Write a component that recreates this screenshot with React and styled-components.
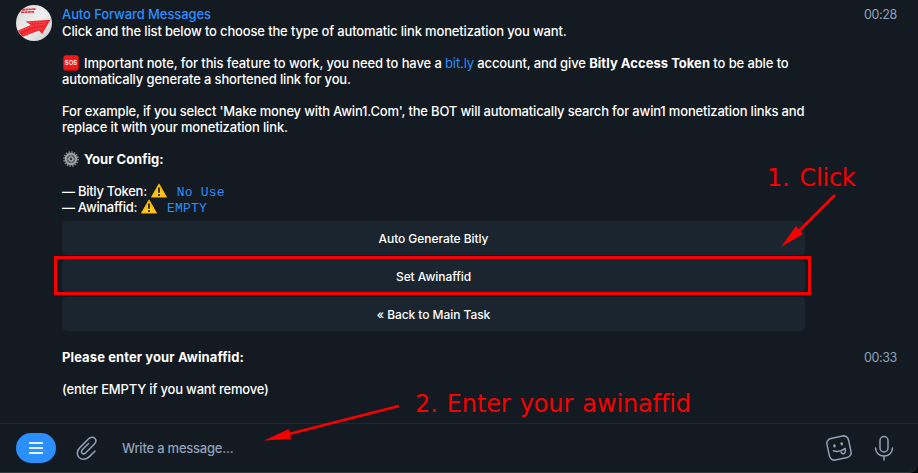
import React from "react";
import styled, { createGlobalStyle } from "styled-components";

const GlobalStyle = createGlobalStyle`
  * { box-sizing: border-box; }
  body { margin: 0; background: #08090b; overflow: hidden; }
`;

const Window = styled.main`
  position: relative;
  display: flex;
  flex-direction: column;
  width: 918px;
  height: 473px;
  background: #141a21;
  border-bottom-right-radius: 9px;
  color: #fff;
  font: 500 13px/16px Inter, "Liberation Sans", sans-serif;
`;

const Messages = styled.section`
  flex: 1;
  padding: 5px 21px 0 16px;
`;

const Message = styled.article`
  display: grid;
  grid-template-columns: 46px 743px 1fr;
  margin-bottom: ${(p) => p.$gap || 0}px;
`;

const Avatar = styled.svg`
  display: block;
  width: 36px;
  height: 36px;
`;

const Content = styled.div`
  grid-column: 2;
`;

const Time = styled.time`
  justify-self: end;
  height: ${(p) => p.$height || 18}px;
  line-height: ${(p) => p.$height || 18}px;
  padding-top: 1px;
  font-weight: 400;
  font-size: 12.5px;
  letter-spacing: -0.35px;
  color: #8fa2b9;
`;

const Sender = styled.div`
  height: 18px;
  line-height: 18px;
  color: #2b8fff;
  letter-spacing: -0.09px;
`;

const Line = styled.div`
  display: flex;
  align-items: center;
  height: 16px;
  white-space: pre;
  letter-spacing: ${(p) => p.$tracking ?? -0.15}px;
  font-weight: ${(p) => (p.$bold ? 700 : 500)};
  margin-bottom: ${(p) => (p.$end ? 16 : 0)}px;
`;

const Strong = styled.strong`
  font-weight: 700;
  letter-spacing: 0.03px;
`;

const Link = styled.a`
  color: #2b8fff;
  font-weight: 400;
`;

const Code = styled.code`
  color: #2b8fff;
  font: 400 13px/16px "Liberation Mono", monospace;
  letter-spacing: 0.2px;
  margin-left: 10px;
  padding-top: 3px;
`;

const Emoji = styled.svg`
  width: 16px;
  height: 16px;
  flex: none;
  margin-left: ${(p) => p.$left || 0}px;
  margin-right: ${(p) => p.$right || 0}px;
`;

const Keyboard = styled.div`
  display: grid;
  gap: 4px;
  margin-top: 6px;
`;

const KeyButton = styled.button`
  height: 34px;
  padding: 1px 0 0;
  border: 0;
  border-radius: 5px;
  background: #1a2530;
  color: #fff;
  font: 500 12px/33px Inter, sans-serif;
  letter-spacing: -0.06px;
`;

const Composer = styled.footer`
  display: flex;
  align-items: center;
  height: 50px;
  padding: 0 24px 0 16px;
  border-top: 1px solid #1d2631;
  border-bottom: 1px solid #34383f;
  border-bottom-right-radius: 9px;
`;

const MenuButton = styled.button`
  display: grid;
  place-items: center;
  width: 40px;
  height: 30px;
  padding: 0;
  border: 0;
  border-radius: 15px;
  background: #2b8fff;
`;

const ToolIcon = styled.svg`
  width: ${(p) => p.$w}px;
  height: ${(p) => p.$h}px;
  margin-left: ${(p) => p.$left}px;
  fill: none;
  stroke: #8fa2b9;
  stroke-width: 1.5;
  stroke-linecap: round;
  stroke-linejoin: round;
`;

const Placeholder = styled.span`
  flex: 1;
  margin-left: 25px;
  color: #8fa2b9;
  letter-spacing: -0.22px;
`;

const Highlight = styled.div`
  position: absolute;
  left: 54px;
  top: 256px;
  width: 757px;
  height: 39px;
  border: 3px solid #f80000;
`;

const Note = styled.span`
  position: absolute;
  left: ${(p) => p.$x}px;
  top: ${(p) => p.$y}px;
  color: #f80000;
  font: 24px/28px "DejaVu Sans", sans-serif;
  font-variant-ligatures: none;
  letter-spacing: ${(p) => p.$tracking}px;
  word-spacing: ${(p) => p.$gap}px;
  white-space: pre;
`;

const Arrows = styled.svg`
  position: absolute;
  inset: 0;
  pointer-events: none;
`;

const Warning = () => (
  <Emoji viewBox="0 0 16 16" $left={4}>
    <path d="M8 1.2 15.3 14H.7Z" fill="#ffc51b" stroke="#f4b60e" strokeWidth="1.2" strokeLinejoin="round" />
    <path d="M8 4.5v5.300M8 11.300v1.7" stroke="#28241c" strokeWidth="1.8" />
  </Emoji>
);

const Sos = () => (
  <Emoji viewBox="0 0 16 16" $left={1} $right={5}>
    <rect x=".2" y=".2" width="15.6" height="15.6" rx="2.8" fill="#cf1015" />
    <rect x=".8" y=".6" width="14.4" height="13.8" rx="2.2" fill="#f0191c" />
    <text x="8" y="10" textAnchor="middle" fill="#fff" fontFamily="Inter" fontSize="6" fontWeight="600" letterSpacing="0">SOS</text>
  </Emoji>
);

const Gear = () => (
  <Emoji viewBox="0 0 16 16" $left={1} $right={5}>
    <circle cx="8" cy="8" r="7" fill="none" stroke="#8c9197" strokeWidth="1.6" strokeDasharray="1.45 1.3" />
    <circle cx="8" cy="8" r="5.3" fill="#545b62" stroke="#a0a4a9" strokeWidth="1.9" />
    <path d="M8 3v3M8 10v3M3 8h3M10 8h3" stroke="#858b91" />
    <circle cx="8" cy="8" r="2" fill="#30373f" stroke="#b0b4b8" strokeWidth="1.2" />
  </Emoji>
);

export default function App() {
  return (
    <>
      <GlobalStyle />
      <Window>
        <Messages>
          <Message $gap={18}>
            <Avatar viewBox="0 0 36 36">
              <defs>
                <clipPath id="disc"><circle cx="18" cy="18" r="18" /></clipPath>
                <linearGradient id="paper" x1="0" y1="0" x2="1" y2="1">
                  <stop stopColor="#d2d2d2" /><stop offset=".5" stopColor="#f0f0f0" /><stop offset="1" stopColor="#c9c9c9" />
                </linearGradient>
              </defs>
              <g clipPath="url(#disc)">
                <path fill="url(#paper)" d="M0 0h36v36H0z" />
                <path d="M6 4.8 20 4M5 7.4l13-.6" stroke="#e33941" strokeWidth="1.7" strokeDasharray="3 .4" />
                <path d="m9.500 16.500 25-1.800-8.500 14.300-3-3.500-17 6.500L2 25.500l13-5.500Z" fill="#f1252d" />
                <path d="m12 18 19-1.200M4 26l15-5.700 10-1.300M7 29.500l15-6.200 5 .5" fill="none" stroke="#f7a9ab" strokeWidth=".5" strokeDasharray="1.500 1.200" />
              </g>
            </Avatar>
            <Content>
              <Sender>Auto Forward Messages</Sender>
              <Line $end>Click and the list below to choose the type of automatic link monetization you want.</Line>
              <Line $tracking={-0.115}><Sos /><span>Important note, for this feature to work, you need to have a <Link>bit.ly</Link> account, and give <Strong>Bitly Access Token</Strong> to be able to</span></Line>
              <Line $end>automatically generate a shortened link for you.</Line>
              <Line $tracking={-0.18}>For example, if you select 'Make money with Awin1.Com', the BOT will automatically search for awin1 monetization links and</Line>
              <Line $end>replace it with your monetization link.</Line>
              <Line $bold $end $tracking={0}><Gear />Your Config:</Line>
              <Line $tracking={-0.28}>— Bitly Token:<Warning /><Code>No Use</Code></Line>
              <Line $tracking={-0.3}>— Awinaffid:<Warning /><Code>EMPTY</Code></Line>
              <Keyboard>
                <KeyButton>Auto Generate Bitly</KeyButton>
                <KeyButton>Set Awinaffid</KeyButton>
                <KeyButton>« Back to Main Task</KeyButton>
              </Keyboard>
            </Content>
            <Time>00:28</Time>
          </Message>
          <Message>
            <Content>
              <Line $bold $end $tracking={0.1}>Please enter your Awinaffid:</Line>
              <Line $tracking={-0.19}>(enter EMPTY if you want remove)</Line>
            </Content>
            <Time $height={16}>00:33</Time>
          </Message>
        </Messages>
        <Composer>
          <MenuButton aria-label="Menu">
            <svg width="14" height="12" viewBox="0 0 14 12">
              <path d="M0 1h14M0 6h14M0 11h14" stroke="#e3f1ff" strokeWidth="1.8" />
            </svg>
          </MenuButton>
          <ToolIcon $w={22} $h={26} $left={19} viewBox="0 0 22 26">
            <path d="m20 16-5.600 5.600c-3.200 3.200-7.500 3.600-10.300.9-2.700-2.700-2.300-6.800.8-9.900l8.700-8.800c2-2 4.700-2.200 6.200-.6 1.600 1.600 1.300 4.100-.6 6.100l-8.400 8.500c-1.200 1.200-2.700 1.400-3.700.4s-.8-2.400.4-3.700l6-6" />
          </ToolIcon>
          <Placeholder>Write a message...</Placeholder>
          <ToolIcon $w={26} $h={26} $left={0} viewBox="0 0 26 26">
            <g transform="rotate(-12 13 13)">
              <rect x="2" y="2" width="22" height="22" rx="5" />
              <path d="M7 14.500c3 2 8 2.100 12 .2M14.300 16v1.600c0 1.200.8 1.900 1.900 1.900 1.500 0 2.600-1.600 2.600-4.500" />
              <ellipse cx="9" cy="10" rx="1.3" ry="1.7" fill="#8fa2b9" stroke="none" />
              <ellipse cx="16.5" cy="9.5" rx="1.3" ry="1.7" fill="#8fa2b9" stroke="none" />
            </g>
          </ToolIcon>
          <ToolIcon $w={20} $h={26} $left={22} viewBox="0 0 20 26">
            <rect x="6" y="1.500" width="8" height="15.500" rx="4" />
            <path d="M1.500 13c0 4.500 3.500 8 8.500 8s8.500-3.500 8.500-8M10 21v4" />
          </ToolIcon>
        </Composer>
        <Highlight />
        <Note $x={767} $y={164} $tracking={-0.25} $gap={2.8}>1. Click</Note>
        <Note $x={415} $y={390} $tracking={-0.12} $gap={1.6}>2. Enter your awinaffid</Note>
        <Arrows width="918" height="473">
          <g stroke="#f80000" strokeWidth="2.8" fill="#f80000">
            <path d="M835 195 799 231M399 406 289 434" />
            <path stroke="none" d="m781 247 15-21 7 8ZM264 440.500l25-11.500 2 10Z" />
          </g>
        </Arrows>
      </Window>
    </>
  );
}
